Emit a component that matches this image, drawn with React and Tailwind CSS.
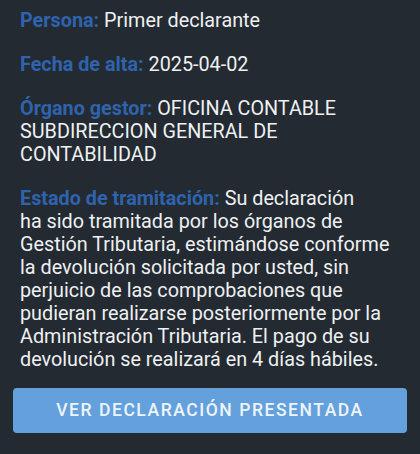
import React from 'react';

const Field = ({ label, children, last }) => (
  <p className={`${last ? 'mb-[17px]' : 'mb-[21px]'} text-[19.8px] leading-[23px] text-[#eef0f2]`}>
    <span className="font-bold text-[#2f63ad]">{label}:</span> {children}
  </p>
);

export default function App() {
  return (
    <div className="h-[454px] w-[420px] bg-[#232a31] font-['Roboto',sans-serif]">
      <div className="px-5 pt-[9px]">
        <Field label="Persona">Primer declarante</Field>
        <Field label="Fecha de alta">2025-04-02</Field>
        <Field label="Órgano gestor">OFICINA CONTABLE SUBDIRECCION GENERAL DE CONTABILIDAD</Field>
        <Field label="Estado de tramitación" last>
          Su declaración
          <br />
          ha sido tramitada por los órganos de Gestión Tributaria, estimándose conforme la devolución solicitada por usted, sin perjuicio de las comprobaciones que pudieran realizarse posteriormente por la Administración Tributaria. El pago de su devolución se realizará en 4 días hábiles.
        </Field>
      </div>
      <div className="px-[13px]">
        <button className="flex h-[45px] w-full items-center justify-center rounded-[4px] bg-[#64a1dc] text-[17.5px] font-medium tracking-[1.55px] text-[#eef4fb]">
          VER DECLARACIÓN PRESENTADA
        </button>
      </div>
    </div>
  );
}
